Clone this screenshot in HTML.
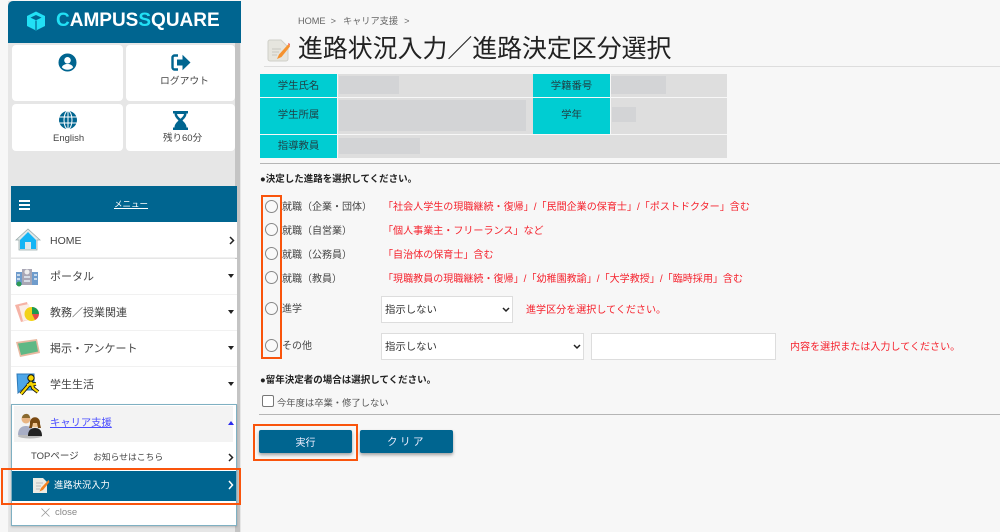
<!DOCTYPE html>
<html lang="ja"><head><meta charset="utf-8"><title>進路状況入力</title>
<style>
*{box-sizing:border-box;margin:0;padding:0}
html,body{width:1000px;height:532px;overflow:hidden;background:#f7f7f7}
body{position:relative;font-family:"Liberation Sans","Noto Sans CJK JP",sans-serif;color:#444}
.a{position:absolute}
.t{position:absolute;white-space:nowrap;line-height:1}
.card{position:absolute;background:#fff;border-radius:4px}
.cy{position:absolute;background:#00cdd2;font-size:10.4px;display:flex;align-items:center;justify-content:center;color:#1f3f44}
.gr{position:absolute;background:#dedede}
.rd{position:absolute;background:#d3d4d6}
.red{position:absolute;white-space:nowrap;line-height:1;color:#f5222d;font-size:10.05px}
.lab{position:absolute;white-space:nowrap;line-height:1;font-size:10px;color:#444}
.radio{position:absolute;width:13px;height:13px;border:1px solid #888;border-radius:50%;background:#f9f9f9}
.sel{position:absolute;background:#fff;border:1px solid #ddd;height:27px;font-size:10.4px;line-height:28px;padding-left:3px;color:#333}
.sel svg{position:absolute;top:10px}
.item{position:absolute;left:11px;width:226px;background:#fff;height:36px;border-bottom:1px solid #f1f1f1}
.item .t{left:39px;top:13px;font-size:11px;color:#444}
.btn{position:absolute;top:430px;width:93px;height:23px;background:#006590;color:#eef;border-radius:2px;box-shadow:0 2px 3px rgba(0,0,0,.35);font-size:10px;display:flex;align-items:center;justify-content:center}
.of{position:absolute;border:2px solid #f9540c}
.ar{position:absolute;width:0;height:0;border-left:3px solid transparent;border-right:3px solid transparent;border-top:4px solid #222;left:217px;top:15px}
</style></head><body>
<!-- sidebar -->
<div class="a" style="left:8px;top:1px;width:233px;height:531px;background:#e6e6e6"></div>
<div class="a" style="left:235px;top:1px;width:5px;height:531px;background:#c4c4c4"></div>
<div class="a" style="left:8px;top:1px;width:233px;height:42px;background:#006590;border-radius:5px 0 0 0"></div>
<svg class="a" style="left:26px;top:11px" width="20" height="20" viewBox="0 0 20 20"><path d="M10 0.5 19 5v10l-9 4.500L1 15V5z" fill="#22e0f5"/><path d="M10 4 4.500 6.600 10 9.300l5.500-2.700z" fill="#006590"/><path d="M10 9.600V19" stroke="#006590" stroke-width="1.200"/></svg>
<div class="t" style="left:56px;top:11px;font-size:19px;font-weight:bold;color:#fff"><span style="color:#22e0f5">C</span>AMPUS<span style="color:#22e0f5">S</span>QUARE</div>

<div class="card" style="left:12px;top:45px;width:111px;height:56px"></div>
<div class="card" style="left:126px;top:45px;width:109px;height:56px"></div>
<div class="card" style="left:12px;top:104px;width:111px;height:47px"></div>
<div class="card" style="left:126px;top:104px;width:109px;height:47px"></div>
<svg class="a" style="left:58px;top:53px" width="19" height="19" viewBox="0 0 19 19"><circle cx="9.500" cy="9.500" r="9" fill="#006590"/><circle cx="9.500" cy="7.300" r="3.300" fill="#fff"/><path d="M3.800 14.200c1.200-2.400 3.400-3.200 5.700-3.200s4.500.8 5.700 3.200c-1.400 1.600-3.400 2.600-5.700 2.600s-4.300-1-5.700-2.600z" fill="#fff"/></svg>
<svg class="a" style="left:171px;top:54px" width="20" height="17" viewBox="0 0 20 17"><path d="M7 1.500H3.500A2 2 0 0 0 1.500 3.500v10a2 2 0 0 0 2 2H7" fill="none" stroke="#006590" stroke-width="2.400"/><path d="M6 5.500h5.500V.8L19.500 8.500l-8 7.700v-4.700H6z" fill="#006590"/></svg>
<div class="t" style="left:160px;top:77px;font-size:9.800px;color:#444">ログアウト</div>
<svg class="a" style="left:59px;top:111px" width="18" height="18" viewBox="0 0 18 18"><circle cx="9" cy="9" r="9" fill="#006590"/><g fill="none" stroke="#fff" stroke-width="1"><ellipse cx="9" cy="9" rx="4" ry="9"/><path d="M9 0v18M0 6h18M0 12h18"/></g></svg>
<svg class="a" style="left:173px;top:111px" width="15" height="19" viewBox="0 0 15 19"><path d="M0 0h15v2.500h-1.500c0 3.500-2.500 5.300-4 7 1.500 1.700 4 3.500 4 7H15V19H0v-2.500h1.500c0-3.500 2.500-5.300 4-7-1.500-1.700-4-3.500-4-7H0z" fill="#006590"/><path d="M4 3h7c-.3 1.800-2 3.500-3.500 4.800C6 6.500 4.300 4.800 4 3z" fill="#fff"/></svg>
<div class="t" style="left:53px;top:134px;font-size:9.500px;color:#444">English</div>
<div class="t" style="left:163px;top:134px;font-size:9.500px;color:#444">残り60分</div>

<!-- menu -->
<div class="a" style="left:11px;top:186px;width:226px;height:36px;background:#006590"></div>
<div class="a" style="left:19px;top:200px;width:11px;height:2px;background:#fff;box-shadow:0 4px 0 #fff,0 8px 0 #fff"></div>
<div class="t" style="left:114px;top:200px;font-size:8.500px;color:#fff;text-decoration:underline">メニュー</div>

<div class="item" style="top:222px"><span class="t" style="top:14px;font-size:10.500px">HOME</span><svg class="a" style="left:217px;top:14px" width="8" height="9" viewBox="0 0 8 9"><path d="M2 1l3.500 3.500L2 8" fill="none" stroke="#222" stroke-width="1.500"/></svg></div>
<div class="item" style="top:259px;height:36px"><span class="t">ポータル</span><i class="ar"></i></div>
<div class="item" style="top:295px"><span class="t">教務／授業関連</span><i class="ar"></i></div>
<div class="item" style="top:331px"><span class="t">掲示・アンケート</span><i class="ar"></i></div>
<div class="item" style="top:367px;height:38px"><span class="t">学生生活</span><i class="ar"></i></div>

<svg class="a" style="left:15px;top:228px" width="26" height="24" viewBox="0 0 26 24"><path d="M13 1 1 12h3v10h18V12h3z" fill="#dfe8ea" stroke="#9aa" stroke-width=".8"/><path d="M13 4 5 12v9h5v-7h6v7h5v-9z" fill="#14b5f5"/></svg>
<svg class="a" style="left:15px;top:265px" width="24" height="23" viewBox="0 0 24 23"><rect x="1" y="7" width="22" height="13" fill="#6f9ccc"/><rect x="7" y="4" width="10" height="16" fill="#a9a7b5"/><circle cx="12" cy="7" r="2.500" fill="#eee"/><path d="M2 10h3M2 14h3M19 10h3M19 14h3M9 12h6M9 16h6" stroke="#e5eef6" stroke-width="1.500"/><circle cx="4" cy="19" r="2.500" fill="#2e9a55"/></svg>
<svg class="a" style="left:15px;top:301px" width="25" height="23" viewBox="0 0 25 23"><path d="M0 4 12 1l5 17-11 3z" fill="#f6b3a6"/><path d="M4 5l10-2 3 15-9 2z" fill="#fbeee6"/><circle cx="16.500" cy="13" r="7" fill="#f2d21a"/><path d="M17 6a7 7 0 0 1 7 7h-7z" fill="#1e9a50"/><path d="M17 13h7a7 7 0 0 1-4 6z" fill="#e44b4b"/></svg>
<svg class="a" style="left:16px;top:339px" width="24" height="18" viewBox="0 0 24 18"><path d="M0 3 21 0l3 14-20 4z" fill="#e8b8a0"/><path d="M2 4.500 20 2l2 10.500L5 16z" fill="#5fb885"/></svg>
<svg class="a" style="left:16px;top:372px" width="25" height="26" viewBox="0 0 25 26"><path d="M1 2h17v16H5l-3 3z" fill="#4da6e8" stroke="#2c79b8"/><circle cx="15" cy="6" r="3.200" fill="#f7d600" stroke="#111"/><path d="M15 10 11 15l-6 7M15 10l2 6 5 4M11 13l9-1" fill="none" stroke="#111" stroke-width="4"/><path d="M15 10 11 15l-6 7M15 10l2 6 5 4M11 13l9-1" fill="none" stroke="#f7d600" stroke-width="2.200"/></svg>

<!-- career box -->
<div class="a" style="left:11px;top:404px;width:226px;height:122px;background:#fff;border:1px solid #7fb0c2;box-shadow:0 1px 2px rgba(0,0,0,.2)"></div>
<div class="a" style="left:14px;top:406px;width:219px;height:36px;background:#f3f3f3"></div>
<svg class="a" style="left:17px;top:411px" width="26" height="28" viewBox="0 0 26 28"><ellipse cx="13" cy="25" rx="12" ry="2.500" fill="#bbb"/><circle cx="9" cy="8" r="4.500" fill="#e9b583"/><path d="M5 7c0-5 8-6 8 0z" fill="#8a6a30"/><path d="M1 24c0-7 4-9 8-9s7 2 7 9z" fill="#a8aec5"/><circle cx="18" cy="12" r="4.500" fill="#f0c48f"/><path d="M13 13c-1-9 11-9 10 0l1 4h-3l-1-5h-4l-1 5h-3z" fill="#7a4a12"/><path d="M11 25c0-6 3-8 7-8s7 2 7 8z" fill="#222"/></svg>
<div class="t" style="left:50px;top:419px;font-size:10.300px;color:#4a4dff;text-decoration:underline">キャリア支援</div>
<div class="a" style="left:228px;top:421px;width:0;height:0;border-left:3px solid transparent;border-right:3px solid transparent;border-bottom:4px solid #2b2bf0"></div>
<div class="t" style="left:31px;top:452px;font-size:9.500px;color:#444">TOPページ</div>
<div class="t" style="left:93px;top:453px;font-size:8.800px;color:#444">お知らせはこちら</div>
<svg class="a" style="left:227px;top:453px" width="8" height="9" viewBox="0 0 8 9"><path d="M2 1l3.500 3.500L2 8" fill="none" stroke="#222" stroke-width="1.500"/></svg>
<div class="a" style="left:12px;top:471px;width:224px;height:30px;background:#006590"></div>
<svg class="a" style="left:33px;top:477px" width="17" height="17" viewBox="0 0 17 17"><path d="M0 1h10l4 4v11H0z" fill="#ecebe4"/><path d="M3 6h7M3 9h5M3 12h4" stroke="#bbb"/><path d="M15.500 3 8 11l-1.500 3.500L10 13l6.500-8z" fill="#f58220"/></svg>
<div class="t" style="left:54px;top:481px;font-size:9.300px;color:#fff">進路状況入力</div>
<svg class="a" style="left:227px;top:480px" width="8" height="10" viewBox="0 0 8 10"><path d="M2 1l3.500 4L2 9" fill="none" stroke="#fff" stroke-width="1.500"/></svg>
<svg class="a" style="left:41px;top:508px" width="9" height="9" viewBox="0 0 9 9"><path d="M.5.500l8 8M8.500.500l-8 8" stroke="#999" stroke-width=".8"/></svg>
<div class="t" style="left:55px;top:508px;font-size:9.500px;color:#888">close</div>

<!-- main header -->
<div class="t" style="left:298px;top:17px;font-size:9.200px;color:#666">HOME<span style="margin:0 7px 0 5px">&gt;</span>キャリア支援<span style="margin-left:6px">&gt;</span></div>
<svg class="a" style="left:267px;top:38px" width="23" height="24" viewBox="0 0 23 24"><path d="M1 4a2 2 0 0 1 2-2h11l7 7v12a2 2 0 0 1-2 2H3a2 2 0 0 1-2-2z" fill="#e6e5de" stroke="#cfcfc8"/><path d="M5 11h9M5 14h7M5 17h5" stroke="#c8c8c0"/><path d="M21.500 6 12 16.500l-2 4.500 4.500-2L23 8.500z" fill="#f5922e"/><path d="M21 5.500l2 2.500 .5-1-1.500-2z" fill="#f05a5a"/></svg>
<div class="t" style="left:298px;top:37px;font-size:24.900px;color:#222;font-weight:400">進路状況入力／進路決定区分選択</div>
<div class="a" style="left:264px;top:66px;width:736px;height:1px;background:#ddd"></div>

<!-- info table -->
<div class="gr" style="left:338px;top:74px;width:195px;height:23px"></div>
<div class="gr" style="left:611px;top:74px;width:116px;height:23px"></div>
<div class="gr" style="left:338px;top:98px;width:195px;height:36px"></div>
<div class="gr" style="left:611px;top:98px;width:116px;height:36px"></div>
<div class="gr" style="left:338px;top:135px;width:389px;height:23px"></div>
<div class="rd" style="left:339px;top:76px;width:60px;height:18px"></div>
<div class="rd" style="left:611px;top:76px;width:55px;height:18px"></div>
<div class="rd" style="left:339px;top:100px;width:187px;height:31px"></div>
<div class="rd" style="left:612px;top:107px;width:24px;height:15px"></div>
<div class="rd" style="left:339px;top:138px;width:81px;height:16px"></div>
<div class="cy" style="left:260px;top:74px;width:77px;height:23px;padding-bottom:3px">学生氏名</div>
<div class="cy" style="left:260px;top:98px;width:77px;height:36px;padding-bottom:6px">学生所属</div>
<div class="cy" style="left:260px;top:135px;width:77px;height:23px;padding-bottom:5px">指導教員</div>
<div class="cy" style="left:533px;top:74px;width:77px;height:23px;padding-bottom:3px">学籍番号</div>
<div class="cy" style="left:533px;top:98px;width:77px;height:36px;padding-bottom:6px">学年</div>
<div class="a" style="left:260px;top:163px;width:740px;height:1px;background:#b5b5b5"></div>

<div class="t" style="left:260px;top:175px;font-size:9.500px;font-weight:bold;color:#222">●決定した進路を選択してください。</div>

<!-- radios -->
<div class="radio" style="left:265px;top:200px"></div>
<div class="radio" style="left:265px;top:223px"></div>
<div class="radio" style="left:265px;top:247px"></div>
<div class="radio" style="left:265px;top:271px"></div>
<div class="radio" style="left:265px;top:302px"></div>
<div class="radio" style="left:265px;top:339px"></div>
<div class="lab" style="left:282px;top:203px">就職（企業・団体）</div>
<div class="lab" style="left:282px;top:227px">就職（自営業）</div>
<div class="lab" style="left:282px;top:251px">就職（公務員）</div>
<div class="lab" style="left:282px;top:275px">就職（教員）</div>
<div class="lab" style="left:282px;top:305px">進学</div>
<div class="lab" style="left:282px;top:342px">その他</div>

<div class="red" style="left:383px;top:203px">「社会人学生の現職継続・復帰」/「民間企業の保育士」/「ポストドクター」含む</div>
<div class="red" style="left:383px;top:227px">「個人事業主・フリーランス」など</div>
<div class="red" style="left:383px;top:251px">「自治体の保育士」含む</div>
<div class="red" style="left:383px;top:275px">「現職教員の現職継続・復帰」/「幼稚園教諭」/「大学教授」/「臨時採用」含む</div>
<div class="red" style="left:526px;top:306px">進学区分を選択してください。</div>
<div class="red" style="left:790px;top:343px">内容を選択または入力してください。</div>

<div class="sel" style="left:381px;top:296px;width:132px">指示しない<svg style="left:120px" width="8" height="6" viewBox="0 0 8 6"><path d="M1 1l3 3 3-3" fill="none" stroke="#222" stroke-width="1.500"/></svg></div>
<div class="sel" style="left:381px;top:333px;width:203px">指示しない<svg style="left:191px" width="8" height="6" viewBox="0 0 8 6"><path d="M1 1l3 3 3-3" fill="none" stroke="#222" stroke-width="1.500"/></svg></div>
<div class="a" style="left:591px;top:333px;width:185px;height:27px;background:#fff;border:1px solid #ddd"></div>

<div class="t" style="left:260px;top:376px;font-size:9.500px;font-weight:bold;color:#222">●留年決定者の場合は選択してください。</div>
<div class="a" style="left:262px;top:395px;width:12px;height:12px;border:1px solid #777;border-radius:2px;background:#fff"></div>
<div class="t" style="left:277px;top:399px;font-size:9.300px;color:#555">今年度は卒業・修了しない</div>
<div class="a" style="left:259px;top:414px;width:741px;height:1px;background:#b5b5b5"></div>

<div class="btn" style="left:259px">実行</div>
<div class="btn" style="left:360px;letter-spacing:2.500px;font-size:10.500px">クリア</div>

<!-- orange frames -->
<div class="of" style="left:1px;top:468px;width:240px;height:37px"></div>
<div class="of" style="left:261px;top:195px;width:21px;height:164px"></div>
<div class="of" style="left:253px;top:424px;width:105px;height:37px"></div>
</body></html>
